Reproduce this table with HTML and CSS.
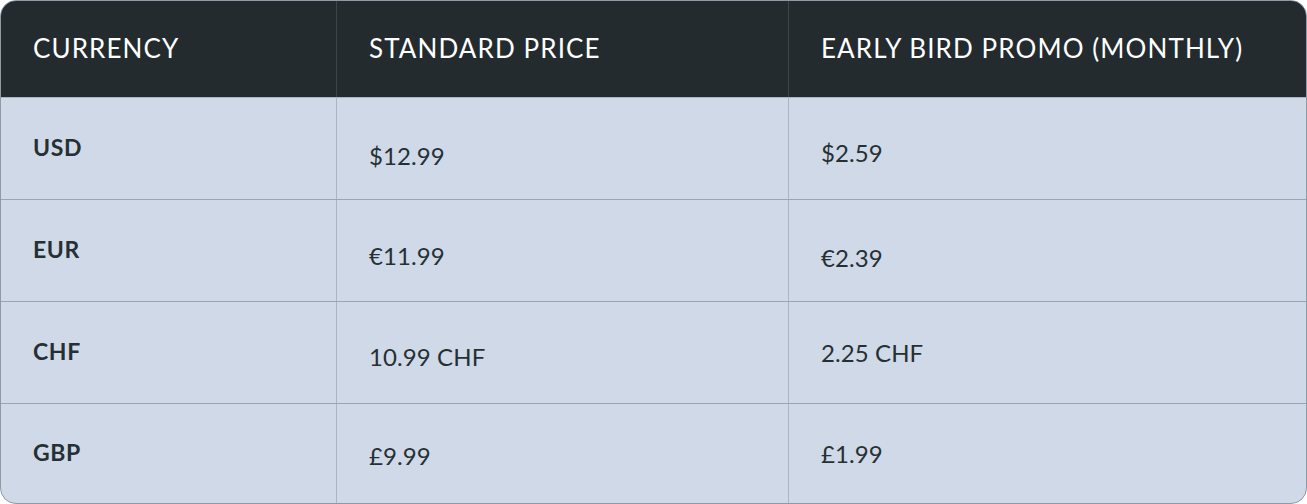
FILE: index.html
```html
<!DOCTYPE html>
<html lang="en">
<head>
<meta charset="utf-8">
<title>Pricing</title>
<link rel="stylesheet" href="styles.css">
</head>
<body>
<div class="table">
  <div class="row head">
    <div class="cell c1">CURRENCY</div>
    <div class="cell c2">STANDARD PRICE</div>
    <div class="cell c3">EARLY BIRD PROMO (MONTHLY)</div>
  </div>
  <div class="row">
    <div class="cell c1 code">USD</div>
    <div class="cell c2 dn8">$12.99</div>
    <div class="cell c3 dn5">$2.59</div>
  </div>
  <div class="row">
    <div class="cell c1 code">EUR</div>
    <div class="cell c2 dn6">€11.99</div>
    <div class="cell c3 dn8">€2.39</div>
  </div>
  <div class="row">
    <div class="cell c1 code">CHF</div>
    <div class="cell c2 dn5">10.99 CHF</div>
    <div class="cell c3">2.25 CHF</div>
  </div>
  <div class="row last">
    <div class="cell c1 code">GBP</div>
    <div class="cell c2 dn2">£9.99</div>
    <div class="cell c3">£1.99</div>
  </div>
</div>
</body>
</html>
```
FILE: styles.css
```css
html, body {
  margin: 0;
  padding: 0;
  background: #ffffff;
}
body {
  font-family: Lato, "Open Sans", sans-serif;
  color: #263034;
}
.table {
  width: 1307px;
  height: 504px;
  box-sizing: border-box;
  border: 1px solid #8e9aa6;
  border-radius: 16px;
  overflow: hidden;
  background: #cfd9e7;
  display: flex;
  flex-direction: column;
}
.row {
  display: grid;
  grid-template-columns: 335px 452px 1fr;
  height: 102px;
  border-bottom: 1px solid #9aa5b3;
  box-sizing: border-box;
}
.row.head {
  height: 97px;
  background: #232b2f;
  color: #ffffff;
  border-bottom: 1px solid #a9b4c2;
}
.row.last {
  border-bottom: none;
  flex: 1;
}
.cell {
  display: flex;
  align-items: center;
  padding-left: 32px;
  font-size: 24px;
  letter-spacing: 0.1px;
  border-left: 1px solid #aab5c4;
  box-sizing: border-box;
}
.cell.c1 {
  border-left: none;
}
.head .cell {
  font-size: 26px;
  letter-spacing: 1.1px;
  border-left-color: #3b464b;
  padding-bottom: 2px;
}
.cell.code {
  font-weight: 700;
  font-size: 23px;
  letter-spacing: 0.6px;
  padding-bottom: 4px;
}
.dn2 { padding-top: 4px; }
.dn5 { padding-top: 8px; }
.dn6 { padding-top: 10px; }
.dn8 { padding-top: 14px; }
```
